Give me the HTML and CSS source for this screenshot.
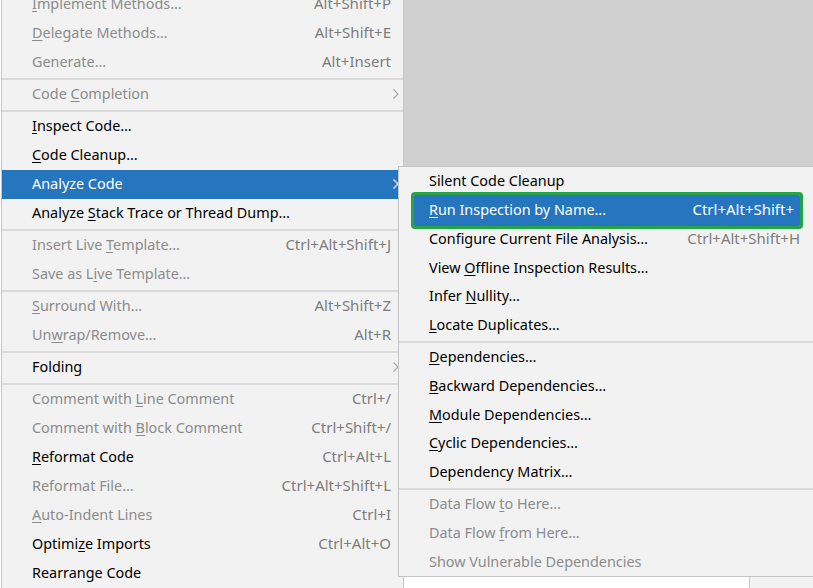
FILE: index.html
```html
<!DOCTYPE html>
<html>
<head>
<meta charset="utf-8">
<link rel="stylesheet" href="styles.css">
</head>
<body>
<div class="screen">
  <div class="editor-edge"></div>
  <div class="menu main">
    <div class="item dis"><span class="label"><u>I</u>mplement Methods…</span><span class="key">Alt+Shift+P</span><span class="arr"></span></div>
    <div class="item dis"><span class="label"><u>D</u>elegate Methods…</span><span class="key">Alt+Shift+E</span><span class="arr"></span></div>
    <div class="item dis"><span class="label">Generate…</span><span class="key">Alt+Insert</span><span class="arr"></span></div>
    <div class="sep"></div>
    <div class="item dis"><span class="label">Code <u>C</u>ompletion</span><span class="key"></span><span class="arr"><svg width="6" height="10" viewBox="0 0 6 10"><polyline points="0.5,0.5 5,5 0.5,9.5" fill="none" stroke="#a6a6a6" stroke-width="1.1"/></svg></span></div>
    <div class="sep"></div>
    <div class="item"><span class="label"><u>I</u>nspect Code…</span><span class="key"></span><span class="arr"></span></div>
    <div class="item"><span class="label"><u>C</u>ode Cleanup…</span><span class="key"></span><span class="arr"></span></div>
    <div class="item sel"><span class="label">Analyze Code</span><span class="key"></span><span class="arr"><svg width="6" height="10" viewBox="0 0 6 10"><polyline points="0.5,0.5 5,5 0.5,9.5" fill="none" stroke="#ffffff" stroke-width="1.1"/></svg></span></div>
    <div class="item"><span class="label">Analyze <u>S</u>tack Trace or Thread Dump…</span><span class="key"></span><span class="arr"></span></div>
    <div class="sep"></div>
    <div class="item dis"><span class="label">Insert Live <u>T</u>emplate…</span><span class="key">Ctrl+Alt+Shift+J</span><span class="arr"></span></div>
    <div class="item dis"><span class="label">Save as L<u>i</u>ve Template…</span><span class="key"></span><span class="arr"></span></div>
    <div class="sep"></div>
    <div class="item dis"><span class="label"><u>S</u>urround With…</span><span class="key">Alt+Shift+Z</span><span class="arr"></span></div>
    <div class="item dis"><span class="label">Un<u>w</u>rap/Remove…</span><span class="key">Alt+R</span><span class="arr"></span></div>
    <div class="sep"></div>
    <div class="item"><span class="label">Folding</span><span class="key"></span><span class="arr"><svg width="6" height="10" viewBox="0 0 6 10"><polyline points="0.5,0.5 5,5 0.5,9.5" fill="none" stroke="#a6a6a6" stroke-width="1.1"/></svg></span></div>
    <div class="sep"></div>
    <div class="item dis"><span class="label">Comment with <u>L</u>ine Comment</span><span class="key">Ctrl+/</span><span class="arr"></span></div>
    <div class="item dis"><span class="label">Comment with <u>B</u>lock Comment</span><span class="key">Ctrl+Shift+/</span><span class="arr"></span></div>
    <div class="item"><span class="label"><u>R</u>eformat Code</span><span class="key">Ctrl+Alt+L</span><span class="arr"></span></div>
    <div class="item dis"><span class="label">Reformat File…</span><span class="key">Ctrl+Alt+Shift+L</span><span class="arr"></span></div>
    <div class="item dis"><span class="label"><u>A</u>uto-Indent Lines</span><span class="key">Ctrl+I</span><span class="arr"></span></div>
    <div class="item"><span class="label">Optimi<u>z</u>e Imports</span><span class="key">Ctrl+Alt+O</span><span class="arr"></span></div>
    <div class="item"><span class="label">Rearrange Code</span><span class="key"></span><span class="arr"></span></div>
  </div>
  <div class="backdrop">
    <div class="backdrop-top"></div>
    <div class="backdrop-bottom"><div class="panel"></div></div>
  </div>
  <div class="menu sub">
    <div class="item"><span class="label">Silent Code Cleanup</span><span class="key"></span></div>
    <div class="item sel boxed"><span class="label"><u>R</u>un Inspection by Name...</span><span class="key">Ctrl+Alt+Shift+</span></div>
    <div class="item"><span class="label">Configure Current File Analysis…</span><span class="key">Ctrl+Alt+Shift+H</span></div>
    <div class="item"><span class="label">View <u>O</u>ffline Inspection Results…</span><span class="key"></span></div>
    <div class="item"><span class="label">Infer <u>N</u>ullity…</span><span class="key"></span></div>
    <div class="item"><span class="label"><u>L</u>ocate Duplicates…</span><span class="key"></span></div>
    <div class="sep"></div>
    <div class="item"><span class="label"><u>D</u>ependencies…</span><span class="key"></span></div>
    <div class="item"><span class="label"><u>B</u>ackward Dependencies…</span><span class="key"></span></div>
    <div class="item"><span class="label"><u>M</u>odule Dependencies…</span><span class="key"></span></div>
    <div class="item"><span class="label"><u>C</u>yclic Dependencies…</span><span class="key"></span></div>
    <div class="item"><span class="label">Dependency Matrix…</span><span class="key"></span></div>
    <div class="sep"></div>
    <div class="item dis"><span class="label">Data Flow <u>t</u>o Here…</span><span class="key"></span></div>
    <div class="item dis"><span class="label">Data Flow <u>f</u>rom Here…</span><span class="key"></span></div>
    <div class="item dis"><span class="label">Show Vulnerable Dependencies</span><span class="key"></span></div>
  </div>
</div>
</body>
</html>
```

FILE: styles.css
```css
html, body {
  margin: 0;
  padding: 0;
}
body {
  width: 813px;
  height: 588px;
  overflow: hidden;
  font-family: "Noto Sans", "Open Sans", sans-serif;
  font-size: 14.4px;
  color: #000;
}
.screen {
  position: relative;
  display: flex;
  width: 813px;
  height: 588px;
  overflow: hidden;
  background: #d0d0d0;
}
.editor-edge {
  width: 1px;
  flex: none;
  background: #ffffff;
}
.menu {
  background: #f2f2f2;
  box-sizing: border-box;
}
.main {
  width: 403px;
  flex: none;
  align-self: flex-start;
  margin-top: -10px;
  border-left: 1px solid #c4c4c4;
  border-right: 1px solid #c4c4c4;
}
.item {
  display: grid;
  align-items: center;
  box-sizing: border-box;
  height: 29px;
  padding-bottom: 3px;
  white-space: nowrap;
}
.main .item {
  grid-template-columns: 1fr auto 12px;
  padding-left: 30px;
}
.label u {
  text-decoration: underline;
  text-underline-offset: 2px;
  text-decoration-thickness: 1px;
}
.key {
  color: #7d7d7d;
  font-size: 15px;
}
.dis .label {
  color: #8c8c8c;
}
.arr {
  display: flex;
  align-items: center;
  padding-left: 2px;
  padding-top: 2px;
}
.arr svg {
  display: block;
}
.sel {
  background: #2675bf;
}
.sel .label, .sel .key {
  color: #ffffff;
}
.sep {
  height: 3px;
  box-sizing: border-box;
  border-top: 1px solid #f2f2f2;
  background: #dadada;
}
.backdrop {
  flex: 1;
  display: flex;
  flex-direction: column;
}
.backdrop-top {
  flex: 1;
  background: #d0d0d0;
}
.backdrop-bottom {
  height: 40px;
  display: flex;
  background: #f2f2f2;
}
.panel {
  width: 345px;
  background: #ffffff;
  border-right: 1px solid #c8c8c8;
}
.sub {
  position: absolute;
  left: 398px;
  top: 166px;
  width: 420px;
  border: 1px solid #c4c4c4;
}
.sub .item {
  grid-template-columns: 1fr auto;
  height: 28.8px;
  padding-bottom: 1.5px;
  padding-left: 30px;
  padding-right: 17px;
}
.sub .boxed {
  height: 30.8px;
  margin: -1px 17px -1px 15px;
  padding-left: 15px;
  padding-right: 6px;
  outline: 3px solid #22a447;
  border-radius: 1px;
  position: relative;
  z-index: 1;
}
```
